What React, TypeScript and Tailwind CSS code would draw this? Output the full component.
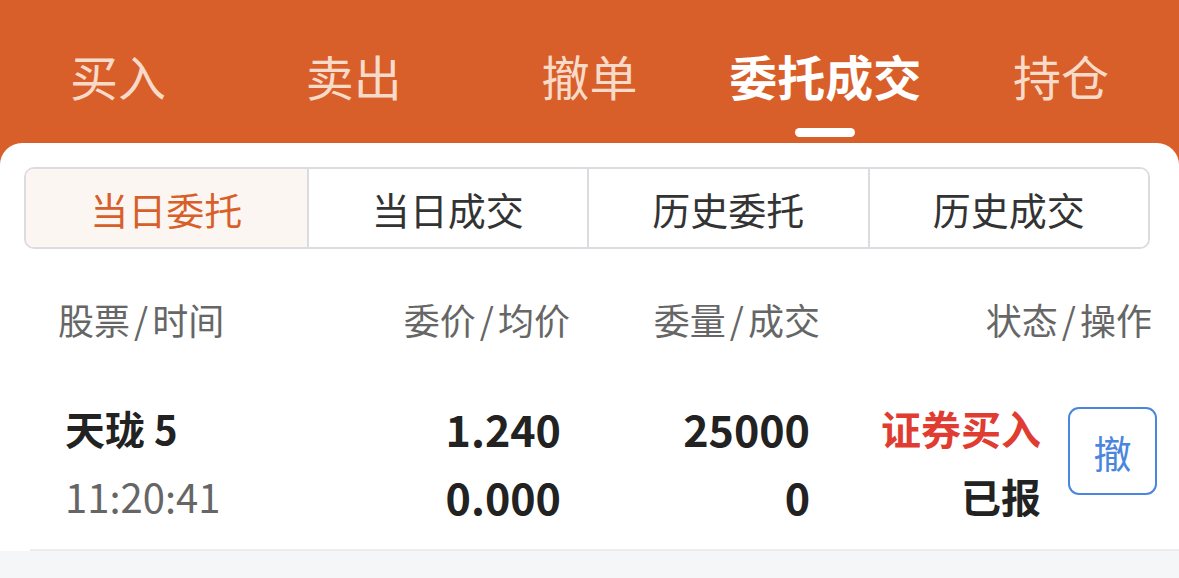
import React from "react";

function Head({ a, b }: { a: string; b: string }) {
  return (
    <>
      {a}
      <span className="mx-[4px]">/</span>
      {b}
    </>
  );
}

export default function App() {
  const tabs = ["买入", "卖出", "撤单", "委托成交", "持仓"];
  const segs = ["当日委托", "当日成交", "历史委托", "历史成交"];
  return (
    <div className="w-[1179px] h-[578px] overflow-hidden bg-[#f5f6f8] font-['Noto_Sans_CJK_SC',sans-serif]">
      <div className="bg-[#d85f2a] grid grid-cols-5 h-[143px]">
        {tabs.map((t, i) => (
          <div key={t} className="flex flex-col items-center pt-[45px]">
            <div
              className={
                "h-[60px] leading-[60px] text-[48px] whitespace-nowrap " +
                (i === 3 ? "text-white font-semibold" : "text-[#f8dac8]")
              }
            >
              {t}
            </div>
            {i === 3 && <div className="mt-[23px] w-[60px] h-[9px] rounded-full bg-white" />}
          </div>
        ))}
      </div>
      <div className="bg-[#d85f2a]">
        <div className="bg-white rounded-t-[22px] pt-[24px]">
          <div className="ml-[24px] mr-[29px] h-[82px] border-2 border-[#dcdce0] rounded-[10px] overflow-hidden grid grid-cols-4">
            {segs.map((s, i) => (
              <div
                key={s}
                className={
                  "flex items-center justify-center text-[38px] " +
                  (i === 0 ? "bg-[#fcf6f2] text-[#d85f2a]" : "bg-white text-[#333333] border-l-2 border-[#dcdce0]")
                }
              >
                {s}
              </div>
            ))}
          </div>
          <div className="mt-[33px] h-[74px] flex items-center pl-[58px] text-[36px] text-[#666666]">
            <div className="w-[300px]"><Head a="股票" b="时间" /></div>
            <div className="w-[212px] text-right"><Head a="委价" b="均价" /></div>
            <div className="w-[250px] text-right"><Head a="委量" b="成交" /></div>
            <div className="w-[332px] text-right"><Head a="状态" b="操作" /></div>
          </div>
          <div className="ml-[30px] border-b-2 border-[#ececee]">
            <div className="flex pl-[35px] pt-[38px] pb-[19px] text-[40px] text-[#222222]">
              <div className="w-[300px] flex flex-col">
                <div className="h-[68px] leading-[68px] font-bold">天珑 5</div>
                <div className="h-[68px] leading-[68px] text-[#666666]">11:20:41</div>
              </div>
              <div className="w-[196px] flex flex-col items-end font-bold text-[43px]">
                <div className="h-[68px] leading-[68px]">1.240</div>
                <div className="h-[68px] leading-[68px]">0.000</div>
              </div>
              <div className="w-[249px] flex flex-col items-end font-bold text-[43px]">
                <div className="h-[68px] leading-[68px]">25000</div>
                <div className="h-[68px] leading-[68px]">0</div>
              </div>
              <div className="w-[231px] flex flex-col items-end font-bold">
                <div className="h-[68px] leading-[68px] text-[#e03c31]">证券买入</div>
                <div className="h-[68px] leading-[68px]">已报</div>
              </div>
              <div className="ml-[27px] mt-[13px] w-[89px] h-[88px] border-2 border-[#4a86de] rounded-[11px] flex items-center justify-center text-[38px] text-[#4a86de]">
                撤
              </div>
            </div>
          </div>
        </div>
      </div>
    </div>
  );
}
